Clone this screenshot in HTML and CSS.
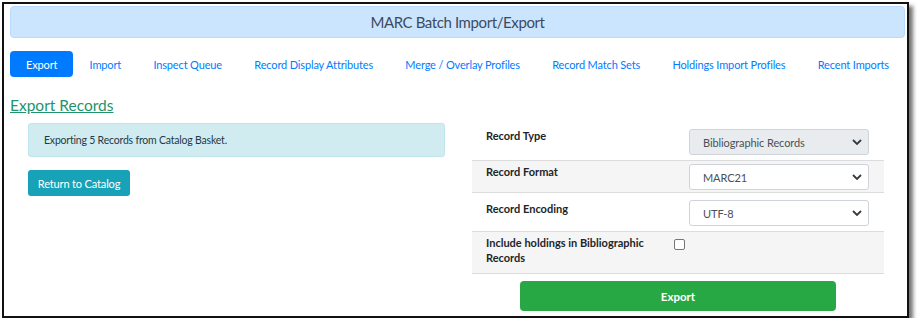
FILE: index.html
```html
<!DOCTYPE html>
<html lang="en">
<head>
<meta charset="utf-8">
<title>MARC Batch Import/Export</title>
<link rel="stylesheet" href="styles.css">
</head>
<body>
<div class="frame">
  <div class="banner">MARC Batch Import/Export</div>
  <nav class="pills">
    <a class="pill active">Export</a>
    <a class="pill">Import</a>
    <a class="pill">Inspect Queue</a>
    <a class="pill">Record Display Attributes</a>
    <a class="pill">Merge / Overlay Profiles</a>
    <a class="pill">Record Match Sets</a>
    <a class="pill">Holdings Import Profiles</a>
    <a class="pill">Recent Imports</a>
  </nav>
  <h2 class="title">Export Records</h2>
  <div class="cols">
    <div class="left">
      <div class="alert">Exporting 5 Records from Catalog Basket.</div>
      <button class="btn-info">Return to Catalog</button>
    </div>
    <div class="right">
      <div class="row r1">
        <div class="label">Record Type</div>
        <div class="ctl"><div class="select disabled"><span>Bibliographic Records</span><svg viewBox="0 0 10 6" width="10" height="6"><path d="M1 1l4 4 4-4" fill="none" stroke="#343a40" stroke-width="1.8"/></svg></div></div>
      </div>
      <div class="row r2 alt">
        <div class="label">Record Format</div>
        <div class="ctl"><div class="select"><span>MARC21</span><svg viewBox="0 0 10 6" width="10" height="6"><path d="M1 1l4 4 4-4" fill="none" stroke="#343a40" stroke-width="1.8"/></svg></div></div>
      </div>
      <div class="row r3">
        <div class="label">Record Encoding</div>
        <div class="ctl"><div class="select"><span>UTF-8</span><svg viewBox="0 0 10 6" width="10" height="6"><path d="M1 1l4 4 4-4" fill="none" stroke="#343a40" stroke-width="1.8"/></svg></div></div>
      </div>
      <div class="row r4 alt">
        <div class="label">Include holdings in Bibliographic Records</div>
        <div class="ctl"><input type="checkbox" class="check"></div>
      </div>
      <div class="actions"><button class="btn-success">Export</button></div>
    </div>
  </div>
</div>
</body>
</html>
```
FILE: styles.css
```css
* { box-sizing: border-box; }
html, body { margin: 0; padding: 0; background: #fff; }
body { font-family: Lato, "Open Sans", sans-serif; color: #212529; }

.frame {
  margin: 2px 0 0 2px;
  width: 907px;
  height: 316px;
  border: 2px solid #111;
  background: #fff;
  box-shadow: 4px 4px 4px rgba(0,0,0,0.55);
  padding: 2px 2px 0 6px;
}

.banner {
  height: 32px;
  background: #cce5ff;
  border: 1px solid #b8daff;
  border-radius: 4px;
  display: flex;
  align-items: center;
  justify-content: center;
  font-size: 15px;
  letter-spacing: -0.4px;
  color: #3d4b5e;
}

.pills {
  display: flex;
  justify-content: space-between;
  margin-top: 13px;
}
.pill {
  height: 26px;
  padding: 0 16px;
  display: flex;
  align-items: center;
  font-size: 11px;
  letter-spacing: -0.15px;
  color: #007bff;
  border-radius: 4px;
  white-space: nowrap;
}
.pill.active { background: #007bff; color: #fff; }

.title {
  margin: 18px 0 0 0;
  font-size: 15.5px;
  font-weight: 400;
  color: #23936b;
  text-decoration: underline;
  line-height: 20px;
}

.cols {
  display: flex;
  margin-top: 5px;
  padding-left: 18px;
}
.left { width: 417px; padding-top: 3px; }
.right { width: 412px; margin-left: 27px; }

.alert {
  height: 34px;
  background: #d1ecf1;
  border: 1px solid #bee5eb;
  border-radius: 3px;
  padding-left: 15px;
  display: flex;
  align-items: center;
  font-size: 10.5px;
  letter-spacing: -0.2px;
  color: #1f3b44;
}
.btn-info {
  margin-top: 13px;
  height: 26px;
  width: 102px;
  border: 0;
  border-radius: 3px;
  background: #17a2b8;
  color: #fff;
  font-family: inherit;
  font-size: 11px;
  letter-spacing: -0.15px;
  padding: 0;
}

.row {
  display: flex;
  border-bottom: 1px solid #dcdcdc;
}
.row.alt { background: #f5f5f5; }
.r1 { height: 41px; }
.r2 { height: 32px; }
.r3 { height: 39px; }
.r4 { height: 42px; }
.label {
  width: 200px;
  padding-left: 14px;
  padding-right: 20px;
  font-size: 11px;
  font-weight: 700;
  line-height: 15px;
  color: #212529;
}
.r1 .label { padding-top: 8px; }
.r2 .label { padding-top: 3px; }
.r3 .label { padding-top: 8px; }
.r4 .label { padding-top: 3px; }

.ctl { flex: 1; }
.select {
  margin-left: 17px;
  width: 180px;
  height: 26px;
  border: 1px solid #ced4da;
  border-radius: 3px;
  background: #fff;
  display: flex;
  align-items: center;
  justify-content: space-between;
  padding: 0 6px 0 13px;
  font-size: 11px;
  letter-spacing: -0.1px;
  color: #495057;
}
.select.disabled { background: #e9ecef; }
.r1 .select { margin-top: 9px; }
.r2 .select { margin-top: 3px; }
.r3 .select { margin-top: 7px; }

.check {
  appearance: none;
  -webkit-appearance: none;
  margin: 7px 0 0 2px;
  width: 11px;
  height: 11px;
  border: 1px solid #767676;
  border-radius: 2px;
  background: #fff;
}

.actions {
  display: flex;
  justify-content: center;
  padding-top: 7px;
}
.btn-success {
  width: 316px;
  height: 30px;
  border: 0;
  border-radius: 4px;
  background: #28a745;
  color: #fff;
  font-family: inherit;
  font-weight: 700;
  font-size: 11.5px;
}
```
